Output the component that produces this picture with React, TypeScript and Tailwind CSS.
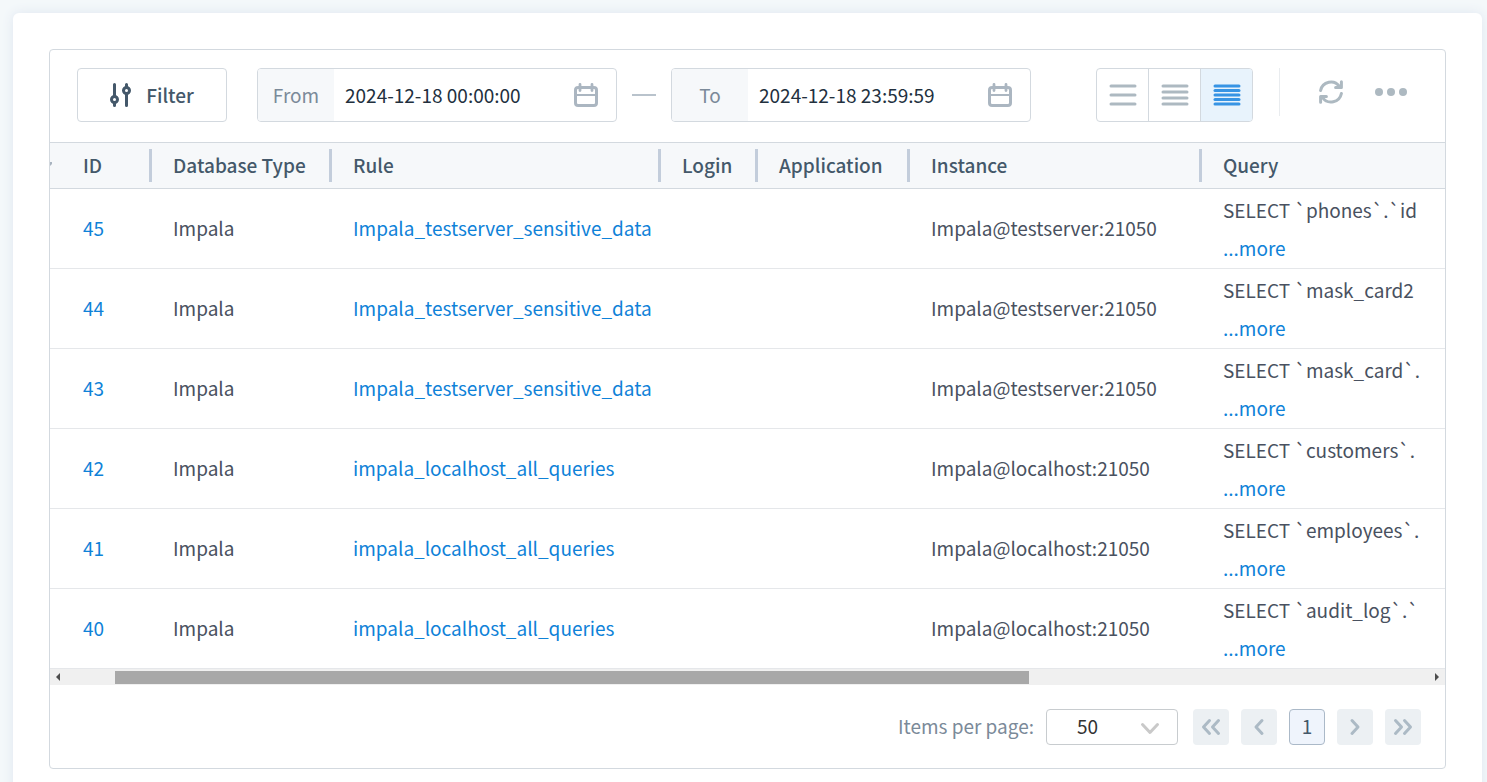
import React from "react";

const columns = [
  { name: "ID", width: "w-[102px]" },
  { name: "Database Type", width: "w-[180px]" },
  { name: "Rule", width: "w-[329px]" },
  { name: "Login", width: "w-[97px]" },
  { name: "Application", width: "w-[152px]" },
  { name: "Instance", width: "w-[292px]" },
  { name: "Query", width: "" },
];

const rows = [
  { id: 45, rule: "Impala_testserver_sensitive_data", instance: "Impala@testserver:21050", query: "SELECT `phones`.`id" },
  { id: 44, rule: "Impala_testserver_sensitive_data", instance: "Impala@testserver:21050", query: "SELECT `mask_card2" },
  { id: 43, rule: "Impala_testserver_sensitive_data", instance: "Impala@testserver:21050", query: "SELECT `mask_card`." },
  { id: 42, rule: "impala_localhost_all_queries", instance: "Impala@localhost:21050", query: "SELECT `customers`." },
  { id: 41, rule: "impala_localhost_all_queries", instance: "Impala@localhost:21050", query: "SELECT `employees`." },
  { id: 40, rule: "impala_localhost_all_queries", instance: "Impala@localhost:21050", query: "SELECT `audit_log`.`" },
];

function FilterIcon() {
  return (
    <svg width="22" height="24" viewBox="0 0 22 24" stroke="#44586a" strokeWidth="3" strokeLinecap="round">
      <path d="M4.5 1.5v21M16.5 1.5v21" />
      <circle cx="4.5" cy="16.5" r="3" fill="#fff" />
      <circle cx="16.5" cy="7.5" r="3" fill="#fff" />
    </svg>
  );
}

function CalendarIcon() {
  return (
    <svg width="24" height="24" viewBox="0 0 24 24" fill="none" stroke="#abb6c1" strokeLinecap="round">
      <rect x="1.5" y="4.5" width="21" height="18" rx="2.6" strokeWidth="3" />
      <path d="M2 12h20" strokeWidth="2.2" />
      <path d="M6 1.5v6M18 1.5v6" strokeWidth="2.8" />
    </svg>
  );
}

function RefreshIcon() {
  return (
    <svg width="24" height="24" viewBox="0 0 24 24" fill="none" stroke="#adb9c1" strokeWidth="3" strokeLinecap="round" strokeLinejoin="round">
      <path d="M1.6 10.5A10.5 10.5 0 0 1 20.5 6.5M22.4 1.8v5.8h-5.8" />
      <path d="M22.4 13.5A10.5 10.5 0 0 1 3.5 17.5M1.6 22.2v-5.8h5.8" />
    </svg>
  );
}

function DateField({ id, label, value }: { id: string; label: string; value: string }) {
  return (
    <div className="flex h-[54px] w-[360px] min-w-0 overflow-hidden rounded border border-[#d3d9df]">
      <label htmlFor={id} className="flex w-[76px] shrink-0 items-center justify-center bg-[#f6f8fa] text-[#7b8a99]">
        {label}
      </label>
      <input id={id} type="text" defaultValue={value} className="min-w-0 flex-1 pl-[11px] text-[#22303e] outline-none" />
      <button type="button" aria-label="Open calendar" className="flex w-[42px] shrink-0 items-center">
        <CalendarIcon />
      </button>
    </div>
  );
}

function DensityButton({ lines, active }: { lines: number[]; active?: boolean }) {
  return (
    <button
      type="button"
      aria-label={`${lines.length} lines`}
      className={`flex flex-1 items-center justify-center ${active ? "bg-[#e8f3fc] text-[#3794e4]" : "text-[#adb9c1]"}`}
    >
      <svg width="28" height="24" viewBox="0 0 28 24" stroke="currentColor" strokeWidth="3" strokeLinecap="round">
        {lines.map((y) => (
          <path key={y} d={`M2 ${y}h24`} />
        ))}
      </svg>
    </button>
  );
}

function PageButton({ label, path }: { label: string; path: string }) {
  return (
    <button type="button" aria-label={label} className="flex size-9 items-center justify-center rounded bg-[#ecf0f3]">
      <svg width="20" height="20" viewBox="0 0 20 20" fill="none" stroke="#acbac5" strokeWidth="3" strokeLinecap="round" strokeLinejoin="round">
        <path d={path} />
      </svg>
    </button>
  );
}

function Toolbar() {
  return (
    <div className="flex h-[92px] items-start px-[27px] pt-[18px]">
      <button type="button" className="mr-[30px] flex h-[54px] w-[150px] shrink-0 items-center justify-center gap-[14px] rounded border border-[#d3d9df] font-medium text-[#44586a]">
        <FilterIcon />
        Filter
      </button>
      <DateField id="from" label="From" value="2024-12-18 00:00:00" />
      <div className="mx-[15px] mt-[26px] h-0.5 w-6 shrink-0 bg-[#b9c3cc]" />
      <DateField id="to" label="To" value="2024-12-18 23:59:59" />
      <div className="ml-auto flex shrink-0 items-start">
        <div className="flex h-[54px] w-[157px] divide-x divide-[#d3d9df] overflow-hidden rounded border border-[#d3d9df]">
          <DensityButton lines={[3, 12, 21]} />
          <DensityButton lines={[3, 9, 15, 21]} />
          <DensityButton lines={[3, 7.5, 12, 16.5, 21]} active />
        </div>
        <div className="mr-[39px] ml-[26px] h-12 w-px bg-[#e9ecef]" />
        <button type="button" aria-label="Refresh" className="flex h-12 items-center">
          <RefreshIcon />
        </button>
        <button type="button" aria-label="More actions" className="mr-[11px] ml-8 flex h-12 items-center gap-1">
          <span className="size-2 rounded-full bg-[#adb9c1]" />
          <span className="size-2 rounded-full bg-[#adb9c1]" />
          <span className="size-2 rounded-full bg-[#adb9c1]" />
        </button>
      </div>
    </div>
  );
}

function EventsTable() {
  return (
    <table className="w-full table-fixed border-separate border-spacing-0 text-left">
      <thead>
        <tr className="h-[47px] bg-[#f6f8fa] text-[#44586a]">
          {columns.map((column, i) => (
            <th key={column.name} className={`border-y border-[#d3d9df] p-0 font-medium ${column.width}`}>
              <div
                className={`flex h-[33px] items-center ${i === 0 ? "gap-[31px]" : "pl-[21px]"} ${
                  i < columns.length - 1 ? "border-r-3 border-[#c3cddb]" : ""
                }`}
              >
                {/* tip of the sort arrow of the column scrolled out on the left */}
                {i === 0 && (
                  <svg width="2" height="8" viewBox="0 0 2 8" fill="#a9b4c0">
                    <path d="M0 0h2v2L0 4z" />
                  </svg>
                )}
                {column.name}
              </div>
            </th>
          ))}
        </tr>
      </thead>
      <tbody className="text-[#495160]">
        {rows.map((row) => (
          <tr key={row.id} className="h-20 *:border-b *:border-[#e5e7ea] *:py-0 *:pr-0 *:pl-[21px]">
            <td className="first:pl-[33px]">
              <a href="#" className="text-[#0f82d8]">{row.id}</a>
            </td>
            <td>Impala</td>
            <td>
              <a href="#" className="text-[#0f82d8]">{row.rule}</a>
            </td>
            <td />
            <td />
            <td>{row.instance}</td>
            <td className="leading-[38px] whitespace-nowrap">
              {row.query}
              <br />
              <a href="#" className="text-[#0f82d8]">...more</a>
            </td>
          </tr>
        ))}
      </tbody>
    </table>
  );
}

function HorizontalScroll() {
  return (
    <div className="flex h-4 items-center justify-between bg-[#f0f0f0] px-[6px]">
      <svg width="4" height="8" viewBox="0 0 4 8" fill="#4d4d4d">
        <path d="M4 0v8L0 4z" />
      </svg>
      <div className="flex flex-1">
        <div className="ml-[4%] h-[13px] w-[66.5%] bg-[#a8a8a8]" />
      </div>
      <svg width="4" height="8" viewBox="0 0 4 8" fill="#4d4d4d">
        <path d="M0 0v8l4-4z" />
      </svg>
    </div>
  );
}

function Pagination() {
  return (
    <div className="flex h-[83px] items-center justify-end gap-3 pr-6">
      <label htmlFor="page-size" className="text-[#7b8a99]">Items per page:</label>
      <div className="relative mr-[3px]">
        <select id="page-size" className="block h-9 w-[132px] appearance-none rounded border border-[#c8cccf] pl-[30px] text-[#333]">
          <option>50</option>
          <option>100</option>
        </select>
        <svg className="pointer-events-none absolute top-3 right-[18px]" width="20" height="14" viewBox="0 0 20 14" fill="none" stroke="#c9c9c9" strokeWidth="3" strokeLinecap="round" strokeLinejoin="round">
          <path d="M2.5 3.5l7.5 8 7.5-8" />
        </svg>
      </div>
      <PageButton label="First page" path="M8.5 3.5L2.5 10l6 6.5M17.5 3.5l-6 6.5 6 6.5" />
      <PageButton label="Previous page" path="M13 3.5L7 10l6 6.5" />
      <button type="button" className="size-9 rounded border border-[#abb9c8] bg-[#eff4fc] text-[#44586a]">1</button>
      <PageButton label="Next page" path="M7 3.5L13 10l-6 6.5" />
      <PageButton label="Last page" path="M2.5 3.5l6 6.5-6 6.5M11.5 3.5l6 6.5-6 6.5" />
    </div>
  );
}

export default function App() {
  return (
    <main className="h-screen overflow-hidden bg-[#f4f8fa] pt-[13px] pr-[5px] pl-[13px] font-['Noto_Sans_CJK_SC',sans-serif] text-[19px]">
      <div className="min-h-full rounded-md bg-white p-9 shadow-[0_0_12px_#dfe6f0]">
        <section className="overflow-hidden rounded border border-[#d3d9df]">
          <Toolbar />
          <EventsTable />
          <HorizontalScroll />
          <Pagination />
        </section>
      </div>
    </main>
  );
}
